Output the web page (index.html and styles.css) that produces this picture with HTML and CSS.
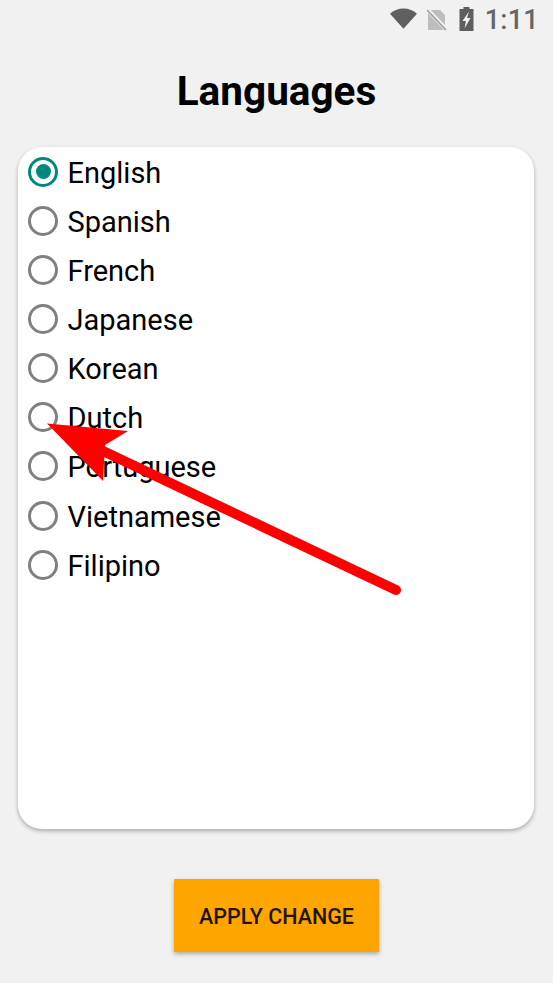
FILE: index.html
```html
<!DOCTYPE html>
<html lang="en">
<head>
<meta charset="utf-8">
<title>Languages</title>
<link rel="stylesheet" href="styles.css">
</head>
<body>
<div class="screen">
  <div class="status">
    <svg class="ic-wifi" viewBox="0 0 28 22"><path d="M0 5.500C3.500 2 8.500 0 14 0s10.500 2 14 5.500L14 21z"/></svg>
    <svg class="ic-sim" viewBox="0 0 20 22"><path d="M1 1h12l5 5v15H1z" fill="#bdbdbd"/><path d="M0 0l19 20" stroke="#f1f1f1" stroke-width="4"/><path d="M0 1l19 20" stroke="#9a9a9a" stroke-width="1.500"/></svg>
    <svg class="ic-bat" viewBox="0 0 15 24"><path d="M4.500 0h6v2h4v22H.5V2h4z"/><path d="M10 4.500L3.500 14h3.500L5.500 21.500 11.500 11H8z" fill="#f1f1f1"/></svg>
    <span class="time">1:11</span>
  </div>
  <h1 class="title">Languages</h1>
  <div class="card">
    <label class="row"><span class="radio on"></span><span class="label">English</span></label>
    <label class="row"><span class="radio"></span><span class="label">Spanish</span></label>
    <label class="row"><span class="radio"></span><span class="label">French</span></label>
    <label class="row"><span class="radio"></span><span class="label">Japanese</span></label>
    <label class="row"><span class="radio"></span><span class="label">Korean</span></label>
    <label class="row"><span class="radio"></span><span class="label">Dutch</span></label>
    <label class="row"><span class="radio"></span><span class="label">Portuguese</span></label>
    <label class="row"><span class="radio"></span><span class="label">Vietnamese</span></label>
    <label class="row"><span class="radio"></span><span class="label">Filipino</span></label>
  </div>
  <div class="actions"><button class="apply">APPLY CHANGE</button></div>
  <svg class="arrow" viewBox="0 0 553 983">
    <path d="M396 590L103 451" stroke="#ff0000" stroke-width="10" stroke-linecap="round" fill="none"/>
    <path d="M47 423.500L128 431L105 445L103 481z" fill="#ff0000"/>
  </svg>
</div>
</body>
</html>
```
FILE: styles.css
```css
* { box-sizing: border-box; }
html, body { margin: 0; padding: 0; }
body { font-family: Roboto, "Liberation Sans", sans-serif; background: #f1f1f1; }
.screen { position: relative; width: 553px; height: 983px; overflow: hidden; background: #f1f1f1; display: flex; flex-direction: column; }
.status { height: 37px; display: flex; align-items: center; justify-content: flex-end; padding: 2px 14px 0 0; flex: none; }
.ic-wifi { width: 27px; height: 22px; fill: #5f5f5f; margin-right: 10px; margin-top: -2px; }
.ic-sim { width: 20px; height: 22px; margin-right: 12px; }
.ic-bat { width: 15px; height: 24px; fill: #5f5f5f; margin-right: 11px; margin-top: -2px; }
.time { font-size: 27px; font-weight: 500; color: #666; line-height: 30px; letter-spacing: 0.3px; }
.title { margin: 32px 0 0; height: 44px; line-height: 44px; text-align: center; font-size: 40.500px; font-weight: 700; color: #000; flex: none; }
.card { margin: 34px 19px 0 18px; height: 682px; background: #fff; border-radius: 24px; box-shadow: 0 2px 4px rgba(0,0,0,0.3); padding: 0 0 0 10px; flex: none; }
.row { display: flex; align-items: center; height: 49.150px; gap: 9.500px; font-size: 29px; color: #000; }
.label { position: relative; top: 1px; }
.radio { width: 30px; height: 30px; border: 3.500px solid #808080; border-radius: 50%; flex: none; display: flex; align-items: center; justify-content: center; }
.radio.on { border-color: #00897b; }
.radio.on::after { content: ""; width: 15px; height: 15px; border-radius: 50%; background: #00897b; }
.actions { display: flex; justify-content: center; margin-top: 50px; flex: none; }
.apply { width: 205px; height: 73px; border: 0; border-radius: 1px; background: #ffa500; color: #221400; font-family: inherit; font-size: 21.500px; font-weight: 500; padding: 2px 0 0; box-shadow: 0 2px 4px rgba(0,0,0,0.3); }
.arrow { position: absolute; left: 0; top: 0; width: 553px; height: 983px; pointer-events: none; }
```
